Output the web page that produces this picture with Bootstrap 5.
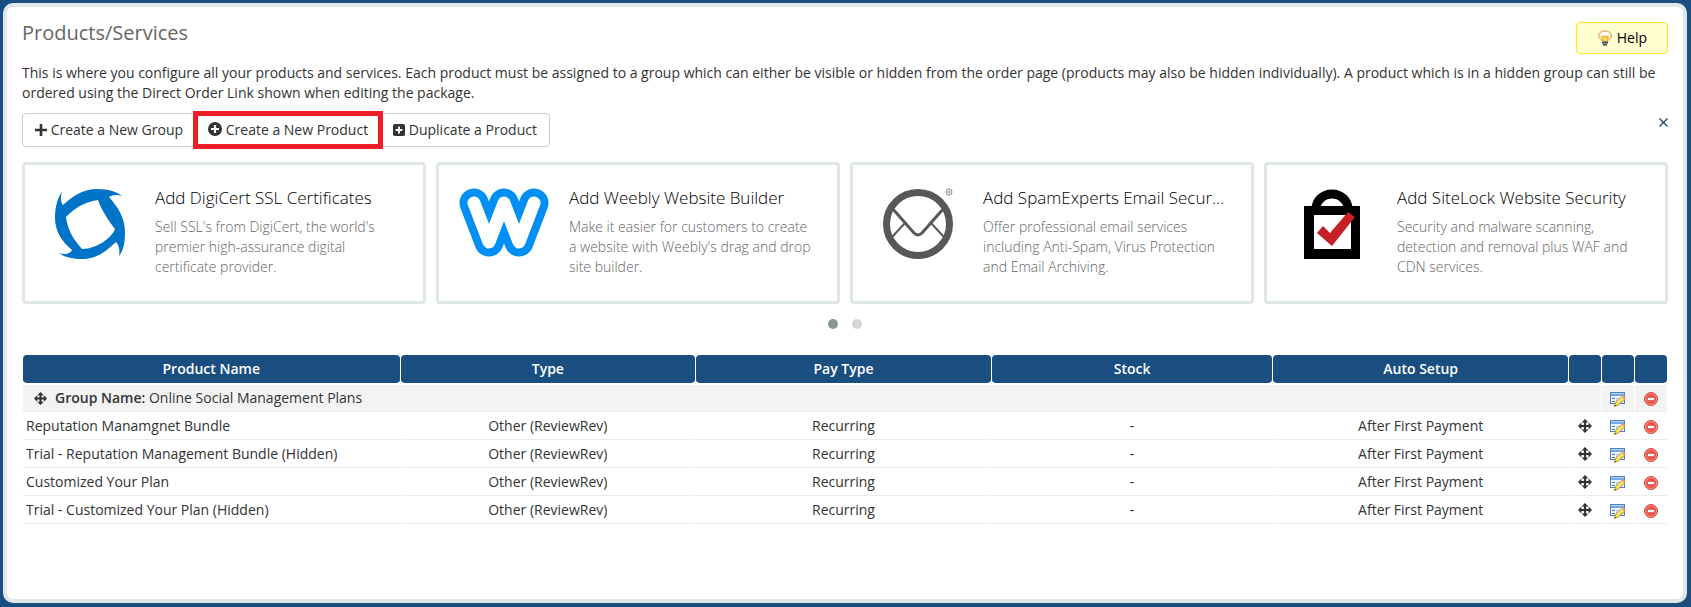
<!DOCTYPE html>
<html lang="en">
<head>
<meta charset="utf-8">
<meta name="viewport" content="width=device-width, initial-scale=1">
<title>Products/Services</title>
<link href="https://cdn.jsdelivr.net/npm/bootstrap@5.3.0/dist/css/bootstrap.min.css" rel="stylesheet">
<style>
  body { background: #1a4d80; color: #333; font: 14px/20px "Open Sans", sans-serif; padding: 3px 4px 4px 3px; }
  .panel { background: #fff; border: 4px solid #e2e7e9; border-radius: 10px; padding: 15px; min-height: calc(100vh - 7px); }
  h1 { font-size: 20px; line-height: 22px; color: #666; }
  .btn { --bs-btn-font-size: 14px; line-height: 20px; }
  .btn-help { background: #ffffd2; border: 1px solid #ffe81e; color: #000; border-radius: 4px; padding: 5px 20px; }
  .intro { margin: 9px 0 10px; }
  .tool-btn { background: #fff; border: 1px solid #ccc; color: #333; padding: 6px 12px; border-radius: 4px; }
  .tool-btn svg { vertical-align: -1px; }
  .marked { outline: 5px solid #ee1c25; outline-offset: -3px; z-index: 2; }
  .btn-dismiss { color: #1a4d80; line-height: 0; margin-top: 5px; }
  .promo-grid { display: grid; grid-template-columns: repeat(4, minmax(0, 1fr)); gap: 10px; margin-top: 15px; }
  .promo { border: 3px solid #e0e7e8; border-radius: 4px; padding: 23px 24px 21px 0; min-height: 142px; color: #000; }
  .promo-logo { flex: 0 0 130px; text-align: center; }
  .promo h2 { font-size: 17px; line-height: 20px; font-weight: 300; margin: 0 0 9px; }
  .promo p { color: #666; font-weight: 300; margin: 0; }
  .pages { gap: 14px; margin: 15px 0 25px; }
  .pager { width: 10px; height: 10px; border-radius: 50%; background: #d6d6d6; border: 0; padding: 0; }
  .pager.current { background: #869791; }
  .products { table-layout: fixed; width: 100%; border-collapse: separate; border-spacing: 1px; text-align: center; }
  .products th { background: #1a4d80; color: #fff; font-weight: 600; height: 29px; border-radius: 4px; border-bottom: 1px solid #fff; background-clip: padding-box; }
  .products td { height: 27px; padding: 3px; border-bottom: 1px solid #ebebeb; line-height: 20px; }
  .products .group-row td { background: #f3f3f3; }
  .icon-cell { padding: 0; color: #333; background: none; border: 0; display: block; margin: 0 auto; line-height: 0; cursor: pointer; }
  .icon-cell svg { display: block; }
  td .act { padding-top: 2px; }
  .w-icon { width: 32px; } .w-name { width: 23%; } .w-col { width: 18%; }
</style>
</head>
<body>
<svg width="0" height="0" class="position-absolute" aria-hidden="true">
  <defs>
    <symbol id="move" viewBox="0 0 14 14"><path fill="#333" d="M7 0l3.400 3.400H8.100v2.500h2.500V3.600L14 7l-3.400 3.400V8.100H8.100v2.500h2.300L7 14l-3.400-3.400h2.300V8.100H3.400v2.300L0 7l3.400-3.400v2.300h2.500V3.400H3.600z"/></symbol>
    <symbol id="edit" viewBox="0 0 16 16">
      <rect x=".5" y="1.500" width="14" height="11" fill="#eef4fc" stroke="#4d7fcb"/>
      <path fill="#77a5e6" d="M1 2h13v3H1z"/><path fill="#b9d3f5" d="M1 2h13v1H1z"/>
      <path fill="#4b70b4" d="M2 7h3v1H2zM2 10h3v1H2z"/><path fill="#fff" stroke="#a3bddf" d="M6.500 7.500h6v3h-6z"/>
      <path fill="#f9d850" stroke="#b98424" stroke-width=".8" d="M4.500 15.300l1-3.500 6.500-6.500 3 2.500-7 6.500z"/>
      <path fill="#ee9d86" d="M12 5l1.500-1 2.200 2.300L15 8z"/><path fill="#fff3a0" d="M6.500 12l5.500-5.600.8.700-5.500 5.600z"/><path fill="#4b3a1c" d="M4.200 15.600l.5-1.800 1.300 1.200z"/>
    </symbol>
    <symbol id="remove" viewBox="0 0 16 16">
      <circle cx="8" cy="8" r="6.500" fill="#ec5449" stroke="#d4473e"/><circle cx="8" cy="8" r="5.500" fill="none" stroke="#f6928a"/>
      <rect x="4.500" y="6.500" width="7" height="3" rx=".5" fill="#fff" stroke="#c9443b" stroke-width=".6"/>
    </symbol>
  </defs>
</svg>
<main class="panel">
  <header class="d-flex justify-content-between align-items-start">
    <h1 class="mb-0">Products/Services</h1>
    <button type="button" class="btn btn-help d-flex align-items-center gap-1">
      <svg width="16" height="16" viewBox="0 0 16 16" aria-hidden="true"><path fill="#f9e7bd" stroke="#dd9b55" d="M5 10.500C3 8.800 1.500 7.500 1.500 5.500 1.500 3 4.200 1 8 1s6.500 2 6.500 4.500c0 2-1.500 3.300-3.500 5z"/><path fill="#fff" d="M4 5c0-2 2-3 4-3s4 1 4 3z"/><path fill="#fbd83c" stroke="#dd9b35" stroke-width=".7" d="M5 6.500h6L10.500 11h-5z"/><path fill="#999" d="M5 11h6v3H5z"/><path fill="#444" d="M5 12h6v1H5zM6 14h4v1.500H6z"/></svg>
      Help
    </button>
  </header>
  <p class="intro">This is where you configure all your products and services. Each product must be assigned to a group which can either be visible or hidden from the order page (products may also be hidden individually). A product which is in a hidden group can still be ordered using the Direct Order Link shown when editing the package.</p>
  <div class="d-flex justify-content-between align-items-start">
    <div class="btn-group" role="group" aria-label="Product actions">
      <button type="button" class="btn tool-btn"><svg width="12" height="12" viewBox="0 0 12 12" aria-hidden="true"><path fill="#333" d="M4.700 0h2.600v4.700H12v2.600H7.300V12H4.700V7.300H0V4.700h4.700z"/></svg> Create a New Group</button>
      <button type="button" class="btn tool-btn marked"><svg width="14" height="14" viewBox="0 0 14 14" aria-hidden="true"><circle cx="7" cy="7" r="7" fill="#333"/><path fill="#fff" d="M5.900 3h2.200v2.900H11v2.200H8.100V11H5.900V8.100H3V5.900h2.900z"/></svg> Create a New Product</button>
      <button type="button" class="btn tool-btn"><svg width="12" height="12" viewBox="0 0 14 14" aria-hidden="true"><rect width="14" height="14" rx="2" fill="#333"/><path fill="#fff" d="M5.900 3h2.200v2.900H11v2.200H8.100V11H5.900V8.100H3V5.900h2.900z"/></svg> Duplicate a Product</button>
    </div>
    <button type="button" class="btn btn-dismiss border-0 p-0" aria-label="Dismiss"><svg width="9" height="9" viewBox="0 0 9 9"><path d="M.5.500l8 8m0-8l-8 8" stroke="#1a3d70" stroke-width="1.200"/></svg></button>
  </div>
  <section class="promo-grid" aria-label="Add-on services">
    <article class="promo d-flex">
      <div class="promo-logo"><svg width="72" height="72" viewBox="0 0 72 72" aria-hidden="true"><path fill="#0074c8" fill-rule="evenodd" d="M8 4C6 10 7 15 9 17C19 8 28 1 44 1C55 1 63 4 68 8C63 6 58 7 55 9C64 19 71 30 71 44C71 56 69 63 65 68C66 62 65 57 62 54C51 64 43 71 27 71C16 71 9 68 5 65C11 67 16 66 18 62C8 54 1 43 1 30C1 18 4 9 8 4ZM12 29C20 21 29 14 44 12C47 21 54 32 61 41C59 48 44 61 28 61C22 54 14 45 12 29Z"/></svg></div>
      <div class="flex-grow-1 overflow-hidden"><h2 class="text-truncate">Add DigiCert SSL Certificates</h2><p>Sell SSL's from DigiCert, the world's premier high-assurance digital certificate provider.</p></div>
    </article>
    <article class="promo d-flex">
      <div class="promo-logo"><svg width="90" height="70" viewBox="0 0 90 70" aria-hidden="true"><g fill="none" stroke-linecap="round" stroke-linejoin="round"><path stroke="#008ff5" stroke-width="29" d="M15 15l15 39 15-39 15 39 15-39"/><path stroke="#fff" stroke-width="13" d="M15 15l15 39 15-39 15 39 15-39"/></g></svg></div>
      <div class="flex-grow-1 overflow-hidden"><h2 class="text-truncate">Add Weebly Website Builder</h2><p>Make it easier for customers to create a website with Weebly's drag and drop site builder.</p></div>
    </article>
    <article class="promo d-flex">
      <div class="promo-logo"><svg width="72" height="72" viewBox="0 0 72 72" overflow="visible" aria-hidden="true"><g fill="none" stroke="#58585a"><circle cx="36" cy="36" r="31.500" stroke-width="7"/><path stroke-width="3" d="M10 20l22 25q4 4 8 0l22-25"/><path stroke-width="2" d="M10 49l13-14M62 49L49 35"/><circle cx="67" cy="4" r="3" stroke="#888"/><circle cx="67" cy="4" r="1" stroke="#888"/></g></svg></div>
      <div class="flex-grow-1 overflow-hidden"><h2 class="text-truncate">Add SpamExperts Email Secur...</h2><p>Offer professional email services including Anti-Spam, Virus Protection and Email Archiving.</p></div>
    </article>
    <article class="promo d-flex">
      <div class="promo-logo"><svg width="56" height="72" viewBox="0 0 56 72" aria-hidden="true"><path fill="none" stroke="#000" stroke-width="9" d="M12 21a16 15 0 0 1 32 0"/><path fill="#000" d="M0 18h56v53H0z"/><path fill="#fff" d="M10 27h37v34H10z"/><path fill="#c52026" d="M13 45l6-7 7 7 18-21 7 5-23 29z"/></svg></div>
      <div class="flex-grow-1 overflow-hidden"><h2 class="text-truncate">Add SiteLock Website Security</h2><p>Security and malware scanning, detection and removal plus WAF and CDN services.</p></div>
    </article>
  </section>
  <nav class="d-flex justify-content-center pages" aria-label="Pages"><button type="button" class="pager current" aria-label="Page 1"></button><button type="button" class="pager" aria-label="Page 2"></button></nav>
  <table class="products">
    <colgroup><col class="w-name"><col class="w-col"><col class="w-col"><col><col class="w-col"><col class="w-icon"><col class="w-icon"><col class="w-icon"></colgroup>
    <thead><tr><th>Product Name</th><th>Type</th><th>Pay Type</th><th>Stock</th><th>Auto Setup</th><th></th><th></th><th></th></tr></thead>
    <tbody>
      <tr class="group-row">
        <td colspan="6" class="text-start"><span class="d-flex align-items-center gap-2 ps-2"><button type="button" class="icon-cell m-0" aria-label="Move group"><svg width="13" height="13"><use href="#move"/></svg></button><span><b class="fw-semibold">Group Name:</b> Online Social Management Plans</span></span></td>
        <td><button type="button" class="icon-cell act" aria-label="Edit"><svg width="16" height="16"><use href="#edit"/></svg></button></td>
        <td><button type="button" class="icon-cell act" aria-label="Delete"><svg width="16" height="16"><use href="#remove"/></svg></button></td>
      </tr>
      <tr>
        <td class="text-start">Reputation Manamgnet Bundle</td><td>Other (ReviewRev)</td><td>Recurring</td><td>-</td><td>After First Payment</td>
        <td><button type="button" class="icon-cell" aria-label="Move"><svg width="14" height="14"><use href="#move"/></svg></button></td>
        <td><button type="button" class="icon-cell act" aria-label="Edit"><svg width="16" height="16"><use href="#edit"/></svg></button></td>
        <td><button type="button" class="icon-cell act" aria-label="Delete"><svg width="16" height="16"><use href="#remove"/></svg></button></td>
      </tr>
      <tr>
        <td class="text-start">Trial - Reputation Management Bundle (Hidden)</td><td>Other (ReviewRev)</td><td>Recurring</td><td>-</td><td>After First Payment</td>
        <td><button type="button" class="icon-cell" aria-label="Move"><svg width="14" height="14"><use href="#move"/></svg></button></td>
        <td><button type="button" class="icon-cell act" aria-label="Edit"><svg width="16" height="16"><use href="#edit"/></svg></button></td>
        <td><button type="button" class="icon-cell act" aria-label="Delete"><svg width="16" height="16"><use href="#remove"/></svg></button></td>
      </tr>
      <tr>
        <td class="text-start">Customized Your Plan</td><td>Other (ReviewRev)</td><td>Recurring</td><td>-</td><td>After First Payment</td>
        <td><button type="button" class="icon-cell" aria-label="Move"><svg width="14" height="14"><use href="#move"/></svg></button></td>
        <td><button type="button" class="icon-cell act" aria-label="Edit"><svg width="16" height="16"><use href="#edit"/></svg></button></td>
        <td><button type="button" class="icon-cell act" aria-label="Delete"><svg width="16" height="16"><use href="#remove"/></svg></button></td>
      </tr>
      <tr>
        <td class="text-start">Trial - Customized Your Plan (Hidden)</td><td>Other (ReviewRev)</td><td>Recurring</td><td>-</td><td>After First Payment</td>
        <td><button type="button" class="icon-cell" aria-label="Move"><svg width="14" height="14"><use href="#move"/></svg></button></td>
        <td><button type="button" class="icon-cell act" aria-label="Edit"><svg width="16" height="16"><use href="#edit"/></svg></button></td>
        <td><button type="button" class="icon-cell act" aria-label="Delete"><svg width="16" height="16"><use href="#remove"/></svg></button></td>
      </tr>
    </tbody>
  </table>
</main>
<script src="https://cdn.jsdelivr.net/npm/bootstrap@5.3.0/dist/js/bootstrap.bundle.min.js"></script>
</body>
</html>
